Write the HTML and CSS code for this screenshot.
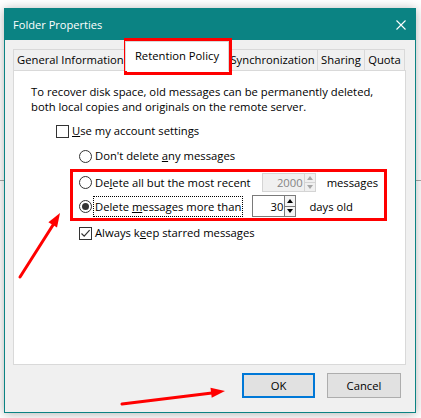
FILE: index.html
```html
<!DOCTYPE html>
<html>
<head>
<meta charset="utf-8">
<title>Folder Properties</title>
<link rel="stylesheet" href="styles.css">
</head>
<body>
<div class="dialog">
  <div class="titlebar">
    <span class="title">Folder Properties</span>
    <svg class="close" width="10" height="10" viewBox="0 0 10 10"><path d="M0.5 0.5 L9.5 9.5 M9.5 0.5 L0.5 9.5" stroke="#fff" stroke-width="1.1" fill="none"/></svg>
  </div>
  <div class="tabs">
    <div class="tab t-general">General Information</div>
    <div class="tab t-retention active">Retention Policy</div>
    <div class="tab t-sync">Synchronization</div>
    <div class="tab t-sharing">Sharing</div>
    <div class="tab t-quota">Quota</div>
  </div>
  <div class="panel">
    <p class="intro">To recover disk space, old messages can be permanently deleted,<br>both local copies and originals on the remote server.</p>
    <div class="row row-account">
      <span class="checkbox"></span><span class="label"><u>U</u>se my account settings</span>
    </div>
    <div class="row row-indent row-dont">
      <span class="radio"></span><span class="label">Don't delete <u>a</u>ny messages</span>
    </div>
    <div class="highlight">
      <div class="row row-recent">
        <span class="radio"></span><span class="label">De<u>l</u>ete all but the most recent</span>
        <span class="spin disabled"><span class="spin-value">2000</span><span class="spin-btns"><span class="spin-btn up"></span><span class="spin-btn down"></span></span></span>
        <span class="after">messages</span>
      </div>
      <div class="row row-days">
        <span class="radio checked"></span><span class="label focus">Delete <u>m</u>essages more than</span>
        <span class="spin enabled"><span class="spin-value">30</span><span class="spin-btns"><span class="spin-btn up"></span><span class="spin-btn down"></span></span></span>
        <span class="after">days old</span>
      </div>
    </div>
    <div class="row row-indent row-starred">
      <span class="checkbox checked"><svg width="11" height="11" viewBox="0 0 11 11"><path d="M1.5 5.5 L4.2 8.2 L9.6 2.2" stroke="#333" stroke-width="1.2" fill="none"/></svg></span><span class="label">Always k<u>e</u>ep starred messages</span>
    </div>
  </div>
  <div class="buttons">
    <div class="btn default">OK</div>
    <div class="btn">Cancel</div>
  </div>
</div>
<div class="tab-mark"></div>
<svg class="arrows" width="421" height="418" viewBox="0 0 421 418">
  <line x1="20" y1="277" x2="53" y2="225" stroke="#f00" stroke-width="3" stroke-linecap="round"/>
  <polygon points="60,213 57,227.5 48.4,222.3" fill="#f00"/>
  <line x1="122" y1="404" x2="212" y2="393" stroke="#f00" stroke-width="3" stroke-linecap="round"/>
  <polygon points="225,391 211.7,397.7 210.5,387.8" fill="#f00"/>
</svg>
</body>
</html>
```

FILE: styles.css
```css
* { box-sizing: border-box; }
html, body { margin: 0; padding: 0; }
body {
  width: 421px;
  height: 418px;
  overflow: hidden;
  background: #fff linear-gradient(to bottom, transparent 180px, #a8a8a8 180px, #a8a8a8 181px, transparent 181px);
  font-family: "Open Sans", "Noto Sans", sans-serif;
  font-size: 11.25px;
  color: #000;
}
.dialog {
  margin: 8px 0 0 4px;
  width: 412px;
  height: 405px;
  border: 1px solid #0b8383;
  background: #f0f0f0;
  box-shadow: 0 1px 10px rgba(0, 0, 0, 0.3);
  display: flex;
  flex-direction: column;
}
.titlebar {
  height: 31px;
  flex: none;
  background: #0b8383;
  display: flex;
  align-items: center;
  justify-content: space-between;
  padding: 0 9px 0 8px;
}
.title { color: #fff; font-size: 11.1px; }
.close { display: block; }

.tabs {
  height: 30px;
  flex: none;
  margin-left: 8px;
  display: flex;
  align-items: flex-end;
}
.tab {
  height: 21px;
  border: 1px solid #d9d9d9;
  border-bottom: none;
  border-right: none;
  background: #f0f0f0;
  text-align: center;
  line-height: 19px;
  white-space: nowrap;
}
.t-general { width: 114px; text-align: left; padding-left: 3px; }
.t-retention { width: 104px; margin: 0 -2px -1px; }
.t-sync { width: 90px; }
.t-sharing { width: 47px; }
.t-quota { width: 41px; border-right: 1px solid #d9d9d9; }
.tab.active {
  height: 30px;
  background: #fff;
  border-right: 1px solid #d9d9d9;
  position: relative;
  z-index: 1;
  line-height: 27px;
}

.panel {
  width: 393px;
  height: 295px;
  flex: none;
  margin-left: 8px;
  border: 1px solid #d9d9d9;
  background: #fff;
  padding: 13px 0 0 17px;
}
.intro { margin: 0; line-height: 15px; }
.row { display: flex; align-items: center; height: 16px; }
.row-account { margin: 9px 0 0 25px; }
.row-indent { margin-left: 48px; }
.row-dont { margin-top: 9px; }
.row-starred { margin-top: 4px; }
.highlight {
  margin: 5px 0 0 39px;
  width: 317px;
  height: 52px;
  border: 3px solid #f00;
  padding: 0 0 0 6px;
}
.row-recent { height: 20px; }
.row-days { height: 22px; margin-top: 3px; }

.checkbox, .radio {
  width: 13px;
  height: 13px;
  flex: none;
  border: 1px solid #333;
  background: #fff;
  margin-right: 1px;
  display: flex;
  align-items: center;
  justify-content: center;
}
.radio { border-radius: 50%; }
.radio.checked::after {
  content: "";
  width: 7px;
  height: 7px;
  border-radius: 50%;
  background: #333;
}
.checkbox svg { display: block; }
.label {
  border: 1px dotted transparent;
  padding: 0 1px;
  line-height: 19px;
  white-space: nowrap;
}
.label.focus { border-color: #000; }
.row-account .label, .row-dont .label, .row-starred .label { line-height: 14px; }

.spin {
  display: flex;
  flex: none;
  margin-left: 9px;
}
.spin.disabled {
  width: 54px;
  height: 19px;
  border: 1px solid #d4d4d4;
  background: #f0f0f0;
  color: #848484;
}
.spin.enabled {
  width: 44px;
  height: 22px;
  border: 1px solid #7a7a7a;
  background: #fff;
}
.spin-value {
  flex: 1;
  text-align: right;
  padding-right: 1px;
  align-self: center;
}
.spin-btns {
  width: 11px;
  display: flex;
  flex-direction: column;
}
.spin-btn {
  flex: 1;
  display: flex;
  align-items: center;
  justify-content: center;
  border-left: 1px solid #d4d4d4;
}
.spin-btn.down { border-top: 1px solid #d4d4d4; }
.spin.enabled .spin-btn { border-color: #7a7a7a; background: #f4f4f4; }
.spin-btn.up::before {
  content: "";
  border-left: 3px solid transparent;
  border-right: 3px solid transparent;
  border-bottom: 4px solid #a6a6a6;
}
.spin-btn.down::before {
  content: "";
  border-left: 3px solid transparent;
  border-right: 3px solid transparent;
  border-top: 4px solid #a6a6a6;
}
.spin.enabled .spin-btn.up::before { border-bottom-color: #000; }
.spin.enabled .spin-btn.down::before { border-top-color: #000; }
.after { margin-left: 11px; white-space: nowrap; }
.row-days .after { margin-left: 13px; }

.buttons {
  display: flex;
  justify-content: flex-end;
  gap: 12px;
  margin-top: 8px;
  padding-right: 14px;
}
.btn {
  width: 74px;
  height: 25px;
  border: 1px solid #adadad;
  background: #e1e1e1;
  display: flex;
  align-items: center;
  justify-content: center;
}
.btn.default { width: 73px; border: 2px solid #0078d7; }

.tab-mark {
  position: absolute;
  left: 124px;
  top: 38px;
  width: 108px;
  height: 37px;
  border: 3px solid #f00;
}
.arrows {
  position: absolute;
  left: 0;
  top: 0;
  pointer-events: none;
}
```
